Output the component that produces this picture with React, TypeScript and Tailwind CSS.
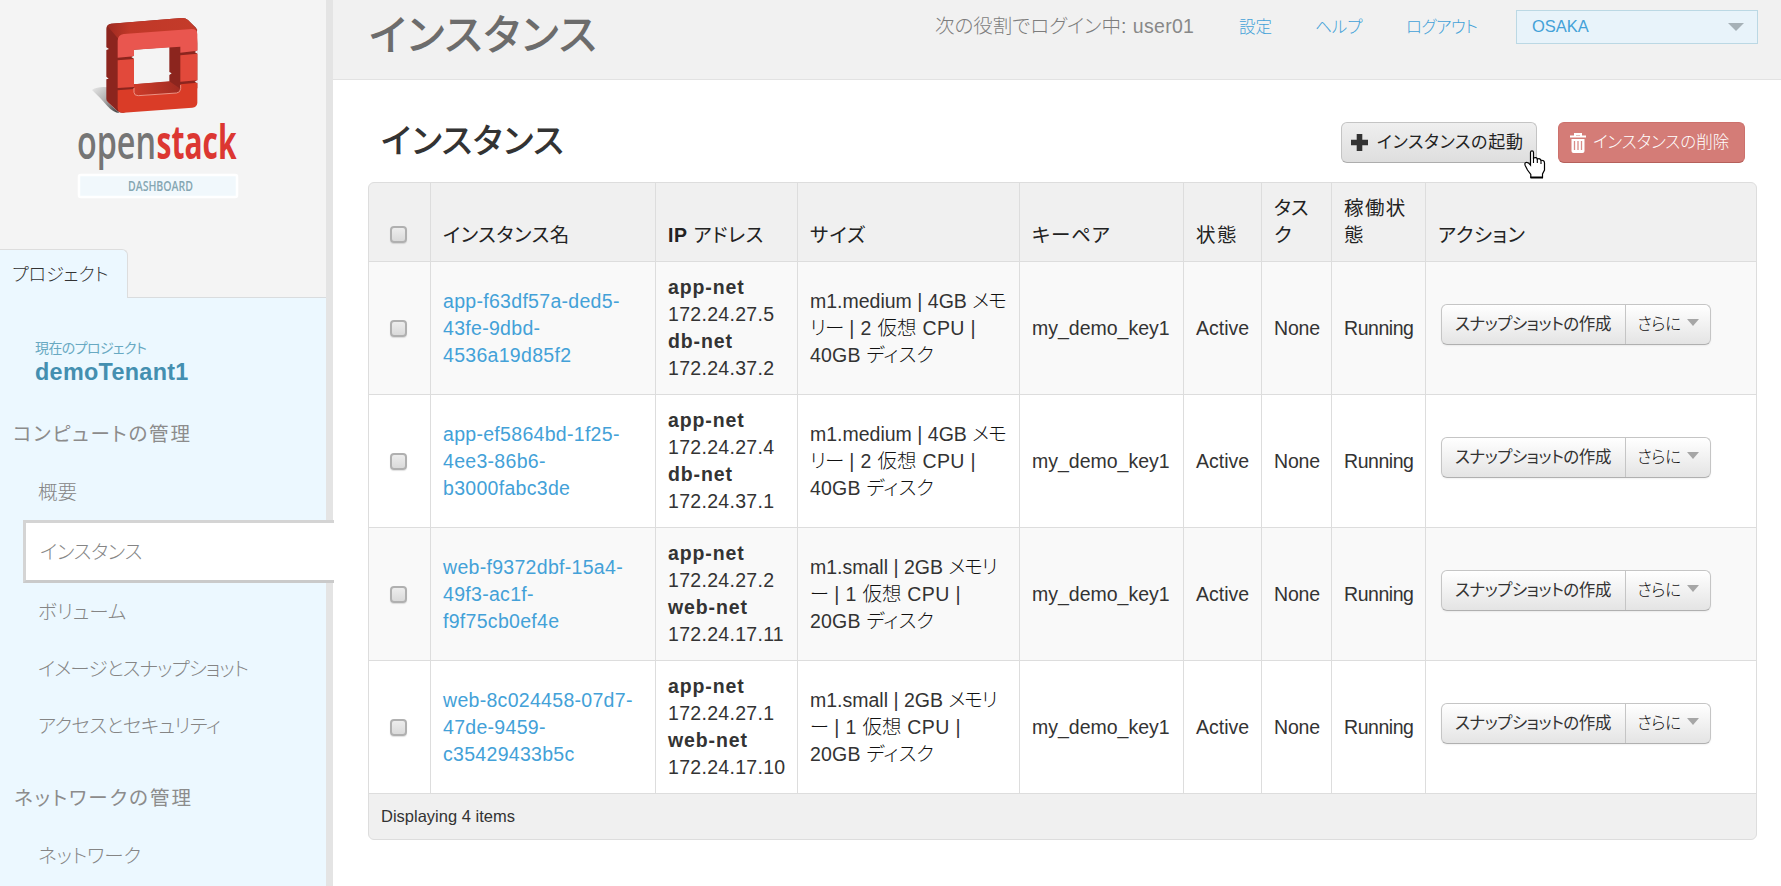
import type { ReactNode } from "react";

type Instance = {
  name: string[];
  nets: [string, string][];
  flavor: string;
  ram: string;
  memo: [string, string];
  cpus: number;
  disk: string;
};

const instances: Instance[] = [
  {
    name: ["app-f63df57a-ded5-", "43fe-9dbd-", "4536a19d85f2"],
    nets: [["app-net", "172.24.27.5"], ["db-net", "172.24.37.2"]],
    flavor: "m1.medium", ram: "4GB", memo: ["メモ", "リー"], cpus: 2, disk: "40GB",
  },
  {
    name: ["app-ef5864bd-1f25-", "4ee3-86b6-", "b3000fabc3de"],
    nets: [["app-net", "172.24.27.4"], ["db-net", "172.24.37.1"]],
    flavor: "m1.medium", ram: "4GB", memo: ["メモ", "リー"], cpus: 2, disk: "40GB",
  },
  {
    name: ["web-f9372dbf-15a4-", "49f3-ac1f-", "f9f75cb0ef4e"],
    nets: [["app-net", "172.24.27.2"], ["web-net", "172.24.17.11"]],
    flavor: "m1.small", ram: "2GB", memo: ["メモリ", "ー"], cpus: 1, disk: "20GB",
  },
  {
    name: ["web-8c024458-07d7-", "47de-9459-", "c35429433b5c"],
    nets: [["app-net", "172.24.27.1"], ["web-net", "172.24.17.10"]],
    flavor: "m1.small", ram: "2GB", memo: ["メモリ", "ー"], cpus: 1, disk: "20GB",
  },
];

const columns = "grid grid-cols-[61px_225px_142px_222px_164px_78px_70px_94px_331px]";

function Logo() {
  return (
    <svg className="block" width="326" height="210" viewBox="0 0 326 210">
      <defs>
        <linearGradient id="shadow" x1="0" x2="1" y1="0" y2="1">
          <stop offset="0" stopColor="#e8e8e8" />
          <stop offset=".45" stopColor="#b4b4b4" />
          <stop offset="1" stopColor="#3c3c3c" />
        </linearGradient>
        <linearGradient id="top" x1="0" x2="1">
          <stop offset="0" stopColor="#9e2a20" />
          <stop offset=".25" stopColor="#c03828" />
          <stop offset="1" stopColor="#c43b2a" />
        </linearGradient>
        <linearGradient id="floor" x1="0" x2="1">
          <stop offset="0" stopColor="#cd3b29" />
          <stop offset="1" stopColor="#a02c22" />
        </linearGradient>
      </defs>
      <g transform="translate(70 10) scale(.33333)">
        <path d="M66 240Q84 229 112 232V275L148 309Q130 308 112 288Q92 264 66 240Z" fill="url(#shadow)" />
        <path d="M109 56Q109 44 122 41L335 24Q346 23 354 30L378 53Q384 60 380 66L382 100V235L160 308Q148 309 142 303L113 276Q109 272 109 266V208L116 206L109 200V120L117 117L109 112Z" fill="#8c251e" />
        <path d="M112 48Q116 42 124 41L335 24Q346 23 354 30L382 60L360 80L150 96L143 84Z" fill="url(#top)" />
        <path d="M192 119L298 111V186L305 190L298 195V215L192 223Z" fill="#f4f4f4" />
        <path d="M192 223L298 214L331 236Q330 247 320 248L205 257Q193 257 192 246Z" fill="url(#floor)" />
        <path d="M143 92Q144 74 161 72L365 57Q382 57 382 73V122L331 128V110L192 119V139L143 143Z" fill="#e9564f" />
        <path d="M143 151L192 147V231L143 234Z M331 136L382 131V211L331 215Z" fill="#e2493b" />
        <path d="M143 241L192 237V247Q193 258 205 257L320 249Q331 248 331 238V223L382 218V279Q381 291 367 293L160 308Q144 309 143 294Z" fill="#da3c27" />
        <path d="M192 234V247Q193 258 205 257L320 249Q331 248 332 236V225" fill="none" stroke="#ee9384" strokeWidth="3" />
        <path d="M184 141L193 137V147ZM383 121L374 126L383 131ZM383 210L374 215L383 220Z" fill="#f4f4f4" />
      </g>
      <g fontFamily="'Open Sans'" fontSize="47">
        <text x="77" y="159" textLength="79" lengthAdjust="spacingAndGlyphs" fontWeight="600" fill="#757575">open</text>
        <text x="156.500" y="159" textLength="80" lengthAdjust="spacingAndGlyphs" fontWeight="700" fill="#dc3732">stack</text>
      </g>
      <rect x="79" y="175" width="158" height="22" rx="1.5" fill="#f1f8fc" stroke="#fff" strokeWidth="2.5" />
      <text x="128" y="191" textLength="65" lengthAdjust="spacingAndGlyphs" fontFamily="'Open Sans'" fontWeight="600" fontSize="14" fill="#85a6b2">DASHBOARD</text>
    </svg>
  );
}

function NavHeading({ children, className }: { children: ReactNode; className: string }) {
  return <h4 className={`h-7 text-[19.5px] leading-[30px] text-[#8c8c8c] ${className}`}>{children}</h4>;
}

function NavItem({ children, className = "" }: { children: ReactNode; className?: string }) {
  return <a className={`block h-[57px] pl-[38px] text-[19.5px] leading-[59px] font-light text-[#858585] ${className}`}>{children}</a>;
}

function Sidebar() {
  return (
    <aside className="relative z-10 flex h-[886px] w-[333px] shrink-0 flex-col border-r-[7px] border-[#e4e4e4] bg-[#f4f4f4]">
      <div className="h-[249px] shrink-0"><Logo /></div>
      <div className="flex h-[49px] shrink-0">
        <div className="w-[128px] rounded-tr-[6px] border-t border-r border-[#ddd] bg-[#ecf8ff] pl-3 text-[18px] leading-[51px] font-light text-[#333]">プロジェクト</div>
        <div className="flex-1 border-b border-[#d9dcde]" />
      </div>
      <nav className="flex-1 bg-[#ecf8ff] pt-[38px]">
        <div className="h-[23px] pl-[35px] text-[14px] leading-[25px] tracking-[-0.6px] text-[#68a9c2]">現在のプロジェクト</div>
        <div className="h-[26px] pl-[35px] text-[23.4px] leading-[26px] font-bold tracking-[0.3px] text-[#448fb0]">demoTenant1</div>
        <NavHeading className="mt-[34px] mb-4 pl-[13px] tracking-[1.8px]">コンピュートの管理</NavHeading>
        <NavItem>概要</NavItem>
        <a className="-mr-2 ml-[23px] block h-[63px] border-y-[3px] border-l-[3px] border-[#d4d4d4] border-b-[#cacaca] bg-white pl-[14px] text-[19.5px] leading-[59px] font-light tracking-[-0.2px] text-[#858585]">インスタンス</a>
        <NavItem>ボリューム</NavItem>
        <NavItem className="tracking-[-0.9px]">イメージとスナップショット</NavItem>
        <NavItem className="tracking-[-0.6px]">アクセスとセキュリティ</NavItem>
        <NavHeading className="mt-[29px] mb-4 pl-[14px] tracking-[2px]">ネットワークの管理</NavHeading>
        <NavItem>ネットワーク</NavItem>
      </nav>
    </aside>
  );
}

function TopBar() {
  return (
    <header className="flex h-20 border-b border-[#e2e2e2] bg-[#f1f1f1] pl-[36px]">
      <h1 className="w-[566px] text-[42px] leading-[72px] font-medium tracking-[1.1px] text-[#6c6c6c]">インスタンス</h1>
      <div className="flex h-[53px] items-center text-[16.5px] whitespace-nowrap text-[#43a1d8]">
        <div className="w-[304px] text-[19.5px] font-light text-[#7d7d7d]">
          次の役割でログイン中: <span className="ml-[1px] font-normal tracking-[0.3px] text-[#888]">user01</span>
        </div>
        <a className="w-[76px] pt-0.5 font-light">設定</a>
        <a className="w-[91px] pt-0.5 font-light">ヘルプ</a>
        <a className="w-[110px] pt-0.5 font-light tracking-[-0.5px]">ログアウト</a>
        <div className="flex h-[34px] w-[242px] items-center justify-between border border-[#bbd8e4] bg-[#e8f3fa] pr-[13px] pl-[15px]">
          OSAKA
          <svg width="16" height="8" viewBox="0 0 16 8"><path d="M0 0H16L8 8Z" fill="#a6b1b7" /></svg>
        </div>
      </div>
    </header>
  );
}

function HandCursor() {
  return (
    <svg className="absolute top-[27px] right-[-10px]" width="22" height="29" viewBox="0 0 22 29">
      <path d="M6.5 15V2.5Q6.5 .9 8 .9T9.5 2.5V8Q12.5 6.700 13.300 9Q16.300 8 17 10.300Q20.300 9.800 20.500 13V20L18.500 24V27.500H6.800V24.500L3.500 20L1.200 15.500Q.3 13 2 12.500Q4 12 6.500 15Z" fill="#fff" stroke="#000" strokeWidth="1.200" />
      <path d="M9.500 7.500V13M13.300 9V13M17 10.300V14" stroke="#000" strokeWidth="1.100" />
      <path d="M6.500 27.500H19" stroke="#000" strokeWidth="2" />
    </svg>
  );
}

function Checkbox() {
  return <input type="checkbox" className="block size-[17px] appearance-none rounded-[4px] border-2 border-[#b0b0b0] bg-linear-to-b from-[#ededed] to-[#dadada] shadow-[0_1px_1px_rgba(0,0,0,0.12)]" />;
}

function Cell({ children, className = "" }: { children: ReactNode; className?: string }) {
  return <div className={`flex flex-col justify-center border-l border-[#ddd] whitespace-nowrap ${className}`}>{children}</div>;
}

function HeadCell({ children, className = "" }: { children: ReactNode; className?: string }) {
  return <div className={`flex flex-col justify-end border-l border-[#ddd] pb-3 pl-3 whitespace-nowrap ${className}`}>{children}</div>;
}

function Row({ item, striped }: { item: Instance; striped: boolean }) {
  return (
    <div className={`h-[133px] border-t border-[#ddd] ${columns} ${striped ? "bg-[#f9f9f9]" : "bg-white"}`}>
      <div className="flex items-center pl-[21px]"><Checkbox /></div>
      <Cell className="pl-3 tracking-[0.3px] text-[#43a1d8]">
        {item.name.map((part) => <span key={part}>{part}</span>)}
      </Cell>
      <Cell className="pl-3">
        {item.nets.map(([net, ip]) => (
          <div key={net} className="tracking-[0.3px]"><b className="block tracking-[0.9px]">{net}</b>{ip}</div>
        ))}
      </Cell>
      <Cell className="pl-3">
        <div>{item.flavor} | {item.ram} <span className="font-light tracking-[-1.1px] text-[#111]">{item.memo[0]}</span></div>
        <div className="tracking-[0.4px]"><span className="font-light tracking-[-0.9px] text-[#111]">{item.memo[1]}</span> | {item.cpus} <span className="font-light tracking-normal text-[#111]">仮想</span> CPU |</div>
        <div className="tracking-[0.2px]">{item.disk} <span className="font-light text-[#111]">ディスク</span></div>
      </Cell>
      <Cell className="pl-3">my_demo_key1</Cell>
      <Cell className="pl-3">Active</Cell>
      <Cell className="pl-3 tracking-[-0.2px]">None</Cell>
      <Cell className="pl-3 tracking-[-0.45px]">Running</Cell>
      <Cell className="pb-[7px] pl-[15px]">
        <div className="flex h-[41px] w-[270px] rounded-[6px] border border-[#c5c5c5] border-b-[#b0b0b0] bg-linear-to-b from-white to-[#e4e4e4] text-[16.5px] leading-[39px] tracking-[-0.45px] shadow-[0_1px_2px_rgba(0,0,0,0.06)]">
          <span className="w-[183px] pl-[13px]">スナップショットの作成</span>
          <span className="flex flex-1 border-l border-[#c5c5c5] pl-[11px] font-light text-[#111]">
            さらに
            <svg className="mt-[14px] ml-[6px]" width="12" height="7" viewBox="0 0 12 7"><path d="M0 0H12L6 7Z" fill="#a6a6a6" /></svg>
          </span>
        </div>
      </Cell>
    </div>
  );
}

export default function App() {
  return (
    <div className="flex h-[886px] w-[1781px] overflow-hidden bg-white font-['Liberation_Sans','Noto_Sans_CJK_JP',sans-serif] text-[19.5px] leading-[27px] text-[#333] [font-feature-settings:'palt']">
      <Sidebar />
      <div className="min-w-0 flex-1">
        <TopBar />
        <main className="pt-[42px] pr-6 pl-[35px]">
          <div className="flex h-[60px] pr-3 pl-[13px]">
            <h2 className="flex-1 text-[34px] leading-[38px] font-medium tracking-[0.6px]">インスタンス</h2>
            <div className="relative mr-[21px] flex h-[41px] w-[196px] items-center rounded-[6px] border border-[#c4c4c4] border-b-[#adadad] bg-linear-to-b from-[#efefef] to-[#dedede] pl-[9px] text-[17px] tracking-[0.7px] whitespace-nowrap text-[#222]">
              <svg className="mr-[9px]" width="17" height="17" viewBox="0 0 17 17"><path d="M5.700 0H11.300V5.700H17V11.300H11.300V17H5.700V11.300H0V5.700H5.700Z" fill="#333" /></svg>
              インスタンスの起動
              <HandCursor />
            </div>
            <div className="flex h-[41px] w-[187px] items-center rounded-[6px] border border-[#cc716c] border-b-[#b5605b] bg-[#d47c77] pl-[11px] text-[16.5px] font-light whitespace-nowrap text-white">
              <svg className="mr-[7px]" width="16" height="20" viewBox="0 0 16 20" fill="none" stroke="#fff">
                <path d="M0 3.500H16M5 3V1H11V3" strokeWidth="2" />
                <path d="M1.500 6H14.500V18Q14.500 20 12.500 20H3.500Q1.500 20 1.500 18Z" fill="#fff" stroke="none" />
                <path d="M4.500 8V17M8 8V17M11.500 8V17" stroke="#d98c88" strokeWidth="1.300" />
              </svg>
              インスタンスの削除
            </div>
          </div>
          <section className="w-[1389px] overflow-hidden rounded-[6px] border border-[#ddd] bg-[#f0f0f0]">
            <div className={`h-[78px] text-[#222] ${columns}`}>
              <div className="flex items-end pb-[18px] pl-[21px]"><Checkbox /></div>
              <HeadCell className="tracking-[0.6px]">インスタンス名</HeadCell>
              <HeadCell><div className="tracking-[0.5px]"><b>IP</b> アドレス</div></HeadCell>
              <HeadCell className="tracking-[1px]">サイズ</HeadCell>
              <HeadCell className="tracking-[0.8px]">キーペア</HeadCell>
              <HeadCell><span className="tracking-[1.4px]">状態</span></HeadCell>
              <HeadCell><span>タス</span><span>ク</span></HeadCell>
              <HeadCell className="tracking-[1.4px]"><span>稼働状</span><span>態</span></HeadCell>
              <HeadCell className="tracking-[0.6px]">アクション</HeadCell>
            </div>
            {instances.map((item, i) => <Row key={item.name[2]} item={item} striped={i % 2 === 0} />)}
            <footer className="h-[46px] border-t border-[#ddd] pl-3 text-[16.5px] leading-[45px]">Displaying 4 items</footer>
          </section>
        </main>
      </div>
    </div>
  );
}
